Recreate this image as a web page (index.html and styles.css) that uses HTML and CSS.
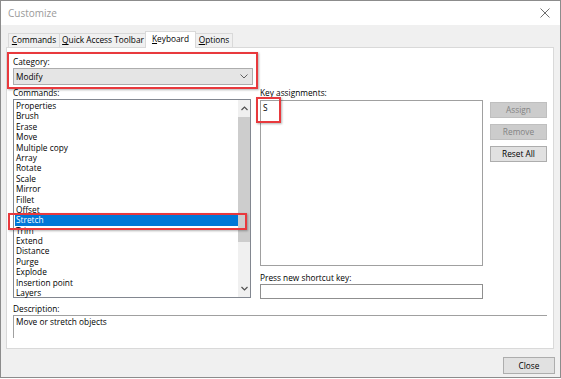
FILE: index.html
```html
<!DOCTYPE html>
<html>
<head>
<meta charset="utf-8">
<link rel="stylesheet" href="styles.css">
</head>
<body>
<div class="window">
  <div class="titlebar">
    <span class="title">Customize</span>
    <svg class="close-x" width="10" height="10" viewBox="0 0 10 10"><path d="M0.5 0.5 L9.5 9.5 M9.5 0.5 L0.5 9.5" stroke="#6f6f6f" stroke-width="1" fill="none"/></svg>
  </div>
  <div class="client">
    <div class="tabs">
      <div class="tab t-cmd"><u>C</u>ommands</div>
      <div class="tab t-qat"><u>Q</u>uick Access Toolbar</div>
      <div class="tab active"><u>K</u>eyboard</div>
      <div class="tab t-opt"><u>O</u>ptions</div>
    </div>
    <div class="panel">
      <div class="lbl cat-lbl">Category:</div>
      <div class="select"><span>Modify</span>
        <svg width="8" height="5" viewBox="0 0 8 5"><path d="M0.5 0.5 L4 4 L7.5 0.5" stroke="#606060" fill="none"/></svg>
      </div>
      <div class="main">
        <div class="left">
          <div class="lbl">Commands:</div>
          <div class="list">
            <ul class="items">
              <li>Properties</li>
              <li>Brush</li>
              <li>Erase</li>
              <li>Move</li>
              <li>Multiple copy</li>
              <li>Array</li>
              <li>Rotate</li>
              <li>Scale</li>
              <li>Mirror</li>
              <li>Fillet</li>
              <li>Offset</li>
              <li class="sel">Stretch</li>
              <li>Trim</li>
              <li>Extend</li>
              <li>Distance</li>
              <li>Purge</li>
              <li>Explode</li>
              <li>Insertion point</li>
              <li>Layers</li>
            </ul>
            <div class="scrollbar">
              <div class="arrow"><svg width="7" height="5" viewBox="0 0 7 5"><path d="M0.5 4 L3.5 1 L6.5 4" stroke="#505050" stroke-width="1.2" fill="none"/></svg></div>
              <div class="track"><div class="thumb"></div></div>
              <div class="arrow"><svg width="7" height="5" viewBox="0 0 7 5"><path d="M0.5 1 L3.5 4 L6.5 1" stroke="#505050" stroke-width="1.2" fill="none"/></svg></div>
            </div>
          </div>
        </div>
        <div class="mid">
          <div class="lbl">Key assignments:</div>
          <div class="keys"><div class="key">S</div></div>
          <div class="lbl press">Press new shortcut key:</div>
          <div class="input"></div>
        </div>
        <div class="btns">
          <div class="btn disabled">Assign</div>
          <div class="btn disabled">Remove</div>
          <div class="btn">Reset All</div>
        </div>
      </div>
      <div class="lbl desc-lbl">Description:</div>
      <div class="desc">Move or stretch objects</div>
    </div>
    <div class="footer">
      <div class="btn close">Close</div>
    </div>
  </div>
  <div class="mark mark-cat"></div>
  <div class="mark mark-key"></div>
  <div class="mark mark-sel"></div>
</div>
</body>
</html>
```
FILE: styles.css
```css
* { box-sizing: border-box; }
html, body { margin: 0; padding: 0; background: #ffffff; }
body {
  font-family: "Open Sans", "Liberation Sans", sans-serif;
  font-size: 8.3px;
  color: #000;
}
.window {
  position: relative;
  width: 561px;
  height: 378px;
  border: 1px solid #8c8c8c;
  display: flex;
  flex-direction: column;
  background: #f0f0f0;
}
.titlebar {
  height: 24px;
  background: #fff;
  display: flex;
  align-items: center;
  justify-content: space-between;
  padding: 0 10px 0 7px;
}
.title {
  font-size: 10px;
  color: #9a9a9a;
}
.client {
  flex: 1;
  padding: 6px 6px 0 5px;
  display: flex;
  flex-direction: column;
}
.tabs {
  display: flex;
  height: 16px;
  padding-left: 2px;
  align-items: flex-end;
}
.tab {
  height: 14px;
  line-height: 12px;
  border: 1px solid #d9d9d9;
  border-bottom: none;
  background: #f0f0f0;
  padding: 0;
  margin-right: -1px;
  white-space: nowrap;
  text-align: center;
}
.t-cmd { width: 52px; }
.t-qat { width: 88px; }
.t-opt { width: 38px; }
.tab.active {
  height: 17px;
  margin: 0 -1px -1px -1px;
  width: 51px;
  background: #fff;
  position: relative;
  z-index: 1;
  line-height: 14px;
}
.tab u { text-decoration: underline; text-underline-offset: 1px; }
.panel {
  height: 302px;
  width: 548px;
  background: #fff;
  border: 1px solid #d9d9d9;
  padding: 8px 6px 0 6px;
  display: flex;
  flex-direction: column;
}
.lbl {
  line-height: 13px;
  height: 13px;
  white-space: nowrap;
}
.cat-lbl { line-height: 12px; height: 12px; }
.select {
  width: 240px;
  height: 17px;
  background: #e5e5e5;
  border: 1px solid #adadad;
  display: flex;
  align-items: center;
  justify-content: space-between;
  padding: 0 4px 0 2px;
}
.main {
  display: flex;
  margin-top: 1px;
}
.left { width: 240px; }
.list {
  height: 199px;
  border: 1px solid #828790;
  display: flex;
}
.items {
  list-style: none;
  margin: 0;
  padding: 1px 0 0 1px;
  flex: 1;
}
.items li {
  height: 10.4px;
  line-height: 10.4px;
  padding-left: 1px;
  white-space: nowrap;
}
.items li.sel {
  background: #0078d7;
  color: #fff;
}
.scrollbar {
  width: 12px;
  background: #f0f0f0;
  display: flex;
  flex-direction: column;
}
.arrow {
  height: 17px;
  display: flex;
  align-items: center;
  justify-content: center;
}
.track { flex: 1; }
.thumb {
  height: 125px;
  background: #cdcdcd;
}
.mid {
  width: 223px;
  margin-left: 9px;
  display: flex;
  flex-direction: column;
}
.keys {
  margin-top: 1px;
  height: 166px;
  border: 1px solid #a0a0a0;
  padding: 1px 2px;
}
.key { line-height: 12px; }
.press { margin-top: 5px; }
.input {
  height: 15px;
  border: 1px solid #8f8f8f;
  width: 223px;
}
.btns {
  margin-left: 7px;
  margin-top: 16px;
  display: flex;
  flex-direction: column;
  gap: 6px;
}
.btn {
  width: 57px;
  height: 16px;
  border: 1px solid #adadad;
  background: #e1e1e1;
  text-align: center;
  line-height: 14px;
}
.btn.disabled {
  background: #cccccc;
  border-color: #bfbfbf;
  color: #838383;
}
.desc-lbl { margin-top: 3px; }
.desc {
  width: 534px;
  height: 23px;
  border-top: 1px solid #a0a0a0;
  border-left: 1px solid #a0a0a0;
  padding: 0 2px;
  line-height: 12px;
}
.footer {
  display: flex;
  justify-content: flex-end;
  padding-top: 8px;
  margin-right: -1px;
}
.btn.close { width: 52px; height: 17px; line-height: 15px; }
.mark {
  position: absolute;
  border: 2px solid #e8393d;
  box-shadow: 1px 1px 2px rgba(0,0,0,0.3);
}
.mark-cat { left: 6px; top: 51px; width: 251px; height: 37px; }
.mark-key { left: 255px; top: 96px; width: 25px; height: 26px; }
.mark-sel { left: 7px; top: 212px; width: 239px; height: 17px; }
```
